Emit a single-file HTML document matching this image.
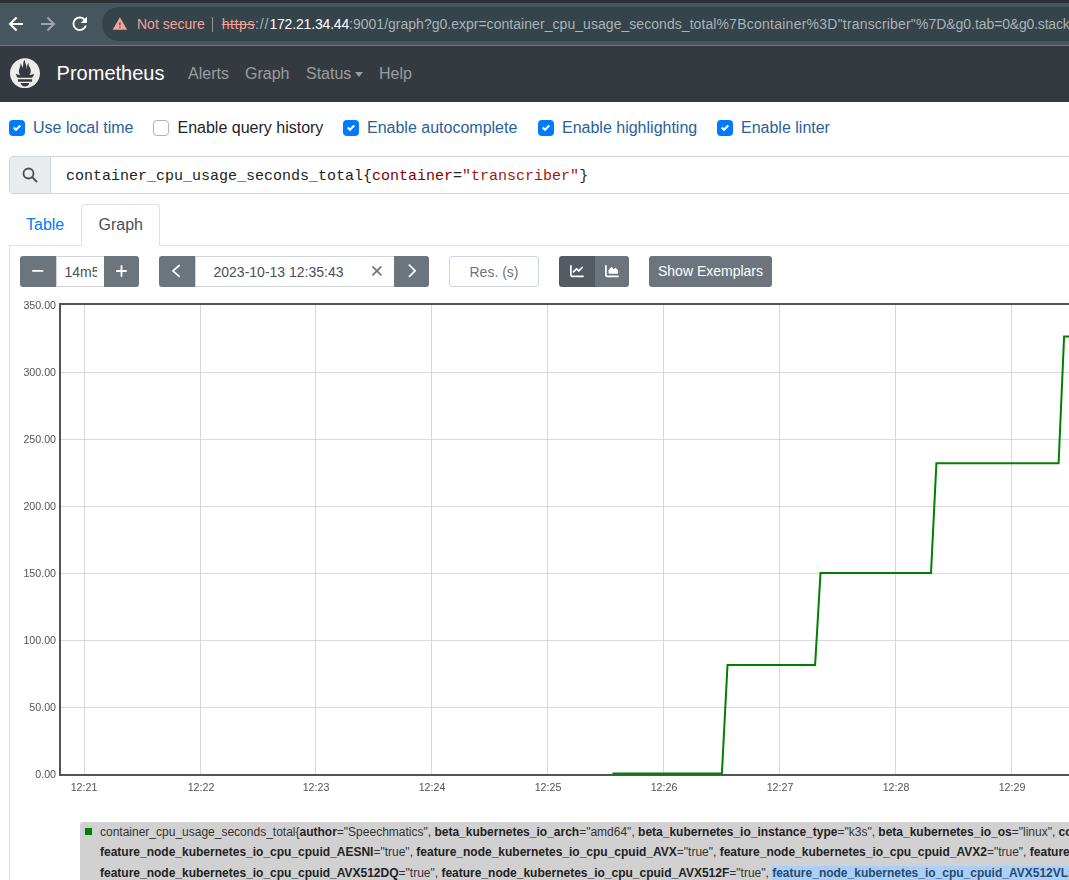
<!DOCTYPE html>
<html><head><meta charset="utf-8">
<style>
*{box-sizing:border-box;margin:0;padding:0}
html,body{width:1069px;height:880px;overflow:hidden;background:#fff;font-family:"Liberation Sans",sans-serif;position:relative}
.a{position:absolute}
/* browser chrome */
#topstrip{left:0;top:0;width:1069px;height:3px;background:#283237}
#toolbar{left:0;top:3px;width:1069px;height:42px;background:#46565e}
#tbline{left:0;top:45px;width:1069px;height:1px;background:#6a7a82}
#omni{left:102px;top:7px;width:1100px;height:34px;border-radius:17px;background:#35434a}
.url{font-size:14px;white-space:pre;line-height:16px}
/* navbar */
#nav{left:0;top:46px;width:1069px;height:56px;background:#343a40}
.navl{font-size:16px;color:rgba(255,255,255,.5);top:62px;line-height:24px}
/* checkboxes */
.cb{width:16px;height:16px;border-radius:4px;top:120px}
.cb.on{background:#007bff}
.cb.off{background:#fff;border:1px solid #adb5bd}
.cbl{font-size:16px;line-height:24px;top:116px;color:#2a609c;white-space:pre}
/* query */
#qgroup{left:9px;top:156px;width:1100px;height:38px;border:1px solid #ced4da;border-radius:4px;background:#fff}
#qprep{left:0;top:0;width:41px;height:36px;background:#e9ecef;border-right:1px solid #ced4da;border-radius:3px 0 0 3px}
#qtext{left:56px;top:9.5px;font-family:"Liberation Mono",monospace;font-size:15px;line-height:20px;white-space:pre;color:#222}
/* tabs */
.tab{font-size:16px;line-height:24px;white-space:pre}
#tabline{left:9px;top:245px;width:1100px;height:1px;background:#dee2e6}
#tabact{left:81px;top:204px;width:79px;height:42px;border:1px solid #dee2e6;border-bottom:none;border-radius:4px 4px 0 0;background:#fff}
#tcl{left:9px;top:245px;width:1px;height:700px;background:#dee2e6}
/* controls */
.btn{background:#6c757d;color:#fff;height:31px;top:256px}
.inp{background:#fff;border:1px solid #ced4da;height:31px;top:256px;color:#495057;font-size:14px;line-height:30px}
/* graph */
.ylab,.xlab{will-change:transform}
.ylab{font-size:10.67px;color:#545454;text-align:right;width:50px;left:5.5px;line-height:12px}
.xlab{font-size:10.67px;color:#545454;text-align:center;width:50px;line-height:12px}
#legend{left:80px;top:822px;width:1100px;height:80px;background:#d1d1d1;border-radius:3px}
.lg{font-size:12px;line-height:20.5px;white-space:pre;color:#333;left:100px}
.lg b{color:#222}
.sel{background:#a9d0fb}
.sel,.sel b{color:#2b4a6a}
</style></head><body>
<div id="topstrip" class="a"></div>
<div id="toolbar" class="a"></div>
<div id="tbline" class="a"></div>
<div id="omni" class="a"></div>

<svg class="a" style="left:0;top:0" width="30" height="45"><path d="M23 24H10.3M16.6 17.5L10 24l6.6 6.5" stroke="#fff" stroke-width="2" fill="none"/></svg>
<svg class="a" style="left:32px;top:0" width="30" height="45"><path d="M9 24H21.7M15.4 17.5L22 24l-6.6 6.5" stroke="#9ba6ac" stroke-width="2" fill="none"/></svg>
<svg class="a" style="left:69.2px;top:13.3px" width="21.6" height="21.6" viewBox="0 0 24 24"><path fill="#fff" d="M17.65 6.35C16.2 4.9 14.21 4 12 4c-4.42 0-7.99 3.58-7.99 8s3.57 8 7.99 8c3.73 0 6.84-2.55 7.73-6h-2.08c-.82 2.33-3.04 4-5.650 4-3.31 0-6-2.690-6-6s2.69-6 6-6c1.66 0 3.14.69 4.22 1.78L13 11h7V4l-2.350 2.35z"/></svg>
<svg class="a" style="left:111.8px;top:15.5px" width="15.8" height="15.8" viewBox="0 0 24 24"><path fill="#f4a199" d="M1 21h22L12 2 1 21zm12-3h-2v-2h2v2zm0-4h-2v-4h2v4z"/></svg>
<div class="a url" style="left:137px;top:16px;color:#f4a199">Not secure</div>
<div class="a" style="left:212px;top:17px;width:1px;height:15px;background:#8a969c"></div>
<div class="a url" style="left:221.7px;top:16px;letter-spacing:0.588px;color:#f4a199;text-decoration:line-through">https</div><div class="a url" style="left:255.0px;top:16px;letter-spacing:0.909px;color:#a9b3b8">://</div><div class="a url" style="left:269.4px;top:16px;letter-spacing:-0.171px;color:#fff">172.21.34.44</div><div class="a url" style="left:349.1px;top:16px;letter-spacing:0.005px;color:#a9b3b8">:9001/graph?g0.expr=</div><div class="a url" style="left:486.6px;top:16px;letter-spacing:0.053px;color:#a9b3b8">container_cpu_usage_seconds_total</div><div class="a url" style="left:716.4px;top:16px;letter-spacing:0.252px;color:#a9b3b8">%7Bcontainer%3D</div><div class="a url" style="left:837.7px;top:16px;letter-spacing:0.171px;color:#a9b3b8">"transcriber"</div><div class="a url" style="left:916.0px;top:16px;letter-spacing:-0.031px;color:#a9b3b8">%7D&amp;g0.tab</div><div class="a url" style="left:994.3px;top:16px;letter-spacing:-0.2px;color:#a9b3b8">=0&amp;g0.stacked=0</div>

<div id="nav" class="a"></div>

<svg class="a" style="left:10px;top:57.8px" width="30.53" height="30.18" viewBox="0 0 115.333 114"><path fill="#ececec" d="M56.667.667C25.372.667 0 26.036 0 57.332c0 31.295 25.372 56.666 56.667 56.666s56.666-25.371 56.666-56.666C113.333 26.036 87.961.667 56.667.667zm0 106.722c-8.904 0-16.123-5.948-16.123-13.283H72.790c0 7.334-7.219 13.283-16.123 13.283zm26.628-17.682H30.034v-9.660h53.263v9.660h-.002zm-.191-14.631H30.197c-.176-.203-.356-.403-.526-.609-5.452-6.620-6.736-10.076-7.983-13.598-.021-.116 6.611 1.355 11.314 2.413 0 0 2.420.560 5.958 1.205-3.397-3.982-5.414-9.044-5.414-14.218 0-11.359 8.712-21.285 5.569-29.308 3.059.249 6.331 6.456 6.552 16.161 3.252-4.494 4.613-12.701 4.613-17.733 0-5.210 3.433-11.262 6.867-11.469-3.061 5.045.793 9.370 4.219 20.099 1.285 4.030 1.121 10.812 2.113 15.113.329-8.933 1.865-21.967 7.532-26.467-2.500 5.667.370 12.758 2.333 16.167 3.167 5.500 5.087 9.667 5.087 17.548 0 5.284-1.951 10.259-5.242 14.148 3.742-.702 6.326-1.335 6.326-1.335l12.152-2.371c.001-.001-1.765 7.261-8.554 14.254z"/></svg>
<div class="a" style="left:56.6px;top:58px;font-size:20px;line-height:30px;color:#fff">Prometheus</div>
<div class="a navl" style="left:188px">Alerts</div>
<div class="a navl" style="left:245px">Graph</div>
<div class="a navl" style="left:306px">Status</div>
<div class="a" style="left:355px;top:72px;width:0;height:0;border-left:4px solid transparent;border-right:4px solid transparent;border-top:5px solid rgba(255,255,255,.5)"></div>
<div class="a navl" style="left:379px">Help</div>


<!-- checkboxes -->
<div class="a cb on" style="left:9px"><svg class="a" style="left:4px;top:4px" width="8" height="8" viewBox="0 0 8 8"><path fill="#fff" d="M6.564.75l-3.59 3.612-1.538-1.55L0 4.26l2.974 2.99L8 2.193z"/></svg></div>
<div class="a cbl" style="left:33px">Use local time</div>
<div class="a cb off" style="left:153px"></div>
<div class="a cbl" style="left:177.5px;color:#212529">Enable query history</div>
<div class="a cb on" style="left:343px"><svg class="a" style="left:4px;top:4px" width="8" height="8" viewBox="0 0 8 8"><path fill="#fff" d="M6.564.75l-3.59 3.612-1.538-1.55L0 4.26l2.974 2.99L8 2.193z"/></svg></div>
<div class="a cbl" style="left:367px">Enable autocomplete</div>
<div class="a cb on" style="left:538px"><svg class="a" style="left:4px;top:4px" width="8" height="8" viewBox="0 0 8 8"><path fill="#fff" d="M6.564.75l-3.59 3.612-1.538-1.55L0 4.26l2.974 2.99L8 2.193z"/></svg></div>
<div class="a cbl" style="left:562px">Enable highlighting</div>
<div class="a cb on" style="left:717px"><svg class="a" style="left:4px;top:4px" width="8" height="8" viewBox="0 0 8 8"><path fill="#fff" d="M6.564.75l-3.59 3.612-1.538-1.55L0 4.26l2.974 2.99L8 2.193z"/></svg></div>
<div class="a cbl" style="left:741px">Enable linter</div>

<!-- query -->
<div id="qgroup" class="a">
  <div id="qprep" class="a"><svg class="a" style="left:12px;top:10px" width="16" height="16" viewBox="0 0 16 16"><circle cx="6.5" cy="6.5" r="5" fill="none" stroke="#495057" stroke-width="1.8"/><line x1="10.2" y1="10.2" x2="14.5" y2="14.5" stroke="#495057" stroke-width="1.8" stroke-linecap="round"/></svg></div>
  <div id="qtext" class="a">container_cpu_usage_seconds_total{<span style="color:#800000">container</span>=<span style="color:#a31515">"transcriber"</span>}</div>
</div>

<!-- tabs -->
<div id="tabline" class="a"></div>
<div id="tcl" class="a"></div>
<div id="tabact" class="a"></div>
<div class="a tab" style="left:26px;top:213px;color:#007bff">Table</div>
<div class="a tab" style="left:98.5px;top:213px;color:#495057">Graph</div>

<!-- controls -->
<div class="a btn" style="left:20px;width:36px;border-radius:3px 0 0 3px"><svg class="a" style="left:12px;top:14px" width="12" height="2"><rect width="11.5" height="1.8" rx=".9" fill="#fff"/></svg></div>
<div class="a inp" style="left:55.5px;width:49px;padding-left:8px;overflow:hidden"><div style="width:32px;overflow:hidden;white-space:nowrap">14m59s</div></div>
<div class="a btn" style="left:104px;width:35px;border-radius:0 3px 3px 0"><svg class="a" style="left:12px;top:9px" width="11" height="12"><rect x="4.6" y="0" width="1.8" height="12" rx=".9" fill="#fff"/><rect x="0" y="5.1" width="11" height="1.8" rx=".9" fill="#fff"/></svg></div>

<div class="a btn" style="left:159px;width:36px;border-radius:3px 0 0 3px"><svg class="a" style="left:12px;top:8px" width="12" height="15"><polyline points="8.2,1.5 1.9,6.9 8.2,12.3" fill="none" stroke="#fff" stroke-width="1.7" stroke-linecap="round" stroke-linejoin="round"/></svg></div>
<div class="a inp" style="left:194.5px;width:200px;padding-left:18px;white-space:pre">2023-10-13 12:35:43</div>
<svg class="a" style="left:370px;top:264px" width="14" height="14"><path d="M2.9 2.9L10.9 10.9M10.9 2.9L2.9 10.9" stroke="#6c757d" stroke-width="1.7" stroke-linecap="round"/></svg>
<div class="a btn" style="left:394px;width:35px;border-radius:0 3px 3px 0"><svg class="a" style="left:12px;top:8px" width="12" height="15"><polyline points="3.4,1.2 9.1,6.8 3.4,12.4" fill="none" stroke="#fff" stroke-width="1.7" stroke-linecap="round" stroke-linejoin="round"/></svg></div>

<div class="a inp" style="left:449px;width:90px;text-align:center;color:#6c757d;border-radius:3px">Res. (s)</div>

<div class="a btn" style="left:559px;width:36px;background:#545b62;border-radius:3px 0 0 3px"><svg class="a" style="left:11px;top:8px" width="14" height="14" viewBox="0 0 512 512"><path fill="#fff" d="M64 64c0-17.7-14.3-32-32-32S0 46.3 0 64V400c0 44.2 35.8 80 80 80H480c17.7 0 32-14.3 32-32s-14.3-32-32-32H80c-8.8 0-16-7.2-16-16V64zm406.6 86.6c12.5-12.5 12.5-32.8 0-45.3s-32.8-12.5-45.300 0L320 210.7l-57.4-57.4c-12.5-12.5-32.8-12.5-45.300 0l-112 112c-12.5 12.5-12.5 32.8 0 45.300s32.8 12.5 45.300 0L240 221.3l57.4 57.4c12.5 12.5 32.8 12.5 45.300 0l128-128z"/></svg></div>
<div class="a btn" style="left:595px;width:34px;border-radius:0 3px 3px 0"><svg class="a" style="left:10px;top:8px" width="14" height="14" viewBox="0 0 512 512"><path fill="#fff" d="M64 64c0-17.7-14.3-32-32-32S0 46.3 0 64V400c0 44.2 35.8 80 80 80H480c17.7 0 32-14.3 32-32s-14.3-32-32-32H80c-8.8 0-16-7.2-16-16V64zm96 288H448c17.7 0 32-14.3 32-32V251.8c0-7.6-2.7-15-7.7-20.8l-65.8-76.8c-12.1-14.2-33.7-15-46.9-1.8l-21 21c-10 10-26.4 9.2-35.4-1.6l-39.2-47c-12.6-15.1-35.7-15.4-48.7-.6L135.9 215c-5.1 5.8-7.9 13.3-7.9 21.1v84c0 17.7 14.3 32 32 32z"/></svg></div>

<div class="a btn" style="left:649px;width:123px;border-radius:3px;font-size:14px;line-height:31px;text-align:center">Show Exemplars</div>

<svg class="a" style="left:0;top:0" width="1069" height="880">
<rect x="84" y="305" width="1" height="469" fill="#d9d9d9"/><rect x="200" y="305" width="1" height="469" fill="#d9d9d9"/><rect x="315" y="305" width="1" height="469" fill="#d9d9d9"/><rect x="431" y="305" width="1" height="469" fill="#d9d9d9"/><rect x="547" y="305" width="1" height="469" fill="#d9d9d9"/><rect x="663" y="305" width="1" height="469" fill="#d9d9d9"/><rect x="779" y="305" width="1" height="469" fill="#d9d9d9"/><rect x="895" y="305" width="1" height="469" fill="#d9d9d9"/><rect x="1011" y="305" width="1" height="469" fill="#d9d9d9"/><rect x="61" y="707" width="1010" height="1" fill="#d9d9d9"/><rect x="61" y="640" width="1010" height="1" fill="#d9d9d9"/><rect x="61" y="573" width="1010" height="1" fill="#d9d9d9"/><rect x="61" y="506" width="1010" height="1" fill="#d9d9d9"/><rect x="61" y="439" width="1010" height="1" fill="#d9d9d9"/><rect x="61" y="372" width="1010" height="1" fill="#d9d9d9"/>
<rect x="59" y="303" width="1020" height="2" fill="#545454"/>
<rect x="59" y="303" width="2" height="473" fill="#545454"/>
<rect x="59" y="774" width="1020" height="2" fill="#545454"/>
<polyline points="612.3,773.6 721.9,773.6 727.5,665.1 815.1,665.1 820.5,573.1 931,573.1 936.4,463.2 1058.6,463.2 1064.1,336.4 1200,336.4" fill="none" stroke="#008000" stroke-width="2" stroke-linejoin="miter"/>
</svg>
<div class="a ylab" style="top:768.0px">0.00</div><div class="a ylab" style="top:701.0px">50.00</div><div class="a ylab" style="top:633.9px">100.00</div><div class="a ylab" style="top:566.9px">150.00</div><div class="a ylab" style="top:499.9px">200.00</div><div class="a ylab" style="top:432.9px">250.00</div><div class="a ylab" style="top:365.8px">300.00</div><div class="a ylab" style="top:298.8px">350.00</div>
<div class="a xlab" style="left:59.0px;top:781px">12:21</div><div class="a xlab" style="left:176.0px;top:781px">12:22</div><div class="a xlab" style="left:291.0px;top:781px">12:23</div><div class="a xlab" style="left:407.0px;top:781px">12:24</div><div class="a xlab" style="left:523.0px;top:781px">12:25</div><div class="a xlab" style="left:639.0px;top:781px">12:26</div><div class="a xlab" style="left:755.0px;top:781px">12:27</div><div class="a xlab" style="left:871.0px;top:781px">12:28</div><div class="a xlab" style="left:987.0px;top:781px">12:29</div>
<div id="legend" class="a"></div>
<div class="a" style="left:84px;top:826px;width:10px;height:10px;border:1px solid #ccc;background:#d0d0d0"></div>
<div class="a" style="left:85px;top:828px;width:7px;height:7px;background:#008000"></div>
<div class="a lg" style="top:822px">container_cpu_usage_seconds_total{<b>author</b>="Speechmatics", <b>beta_kubernetes_io_arch</b>="amd64", <b>beta_kubernetes_io_instance_type</b>="k3s", <b>beta_kubernetes_io_os</b>="linux", <b>container</b>="transcriber", </div>
<div class="a lg" style="top:842px"><b>feature_node_kubernetes_io_cpu_cpuid_AESNI</b>="true", <b>feature_node_kubernetes_io_cpu_cpuid_AVX</b>="true", <b>feature_node_kubernetes_io_cpu_cpuid_AVX2</b>="true", <b>feature_node_kubernetes_io_cpu_cpuid_AVX512BW</b>="true", </div>
<div class="a lg" style="top:863px"><b>feature_node_kubernetes_io_cpu_cpuid_AVX512DQ</b>="true", <b>feature_node_kubernetes_io_cpu_cpuid_AVX512F</b>="true", <span class="sel"><b>feature_node_kubernetes_io_cpu_cpuid_AVX512VL</b>="true"</span></div>

</body></html>
